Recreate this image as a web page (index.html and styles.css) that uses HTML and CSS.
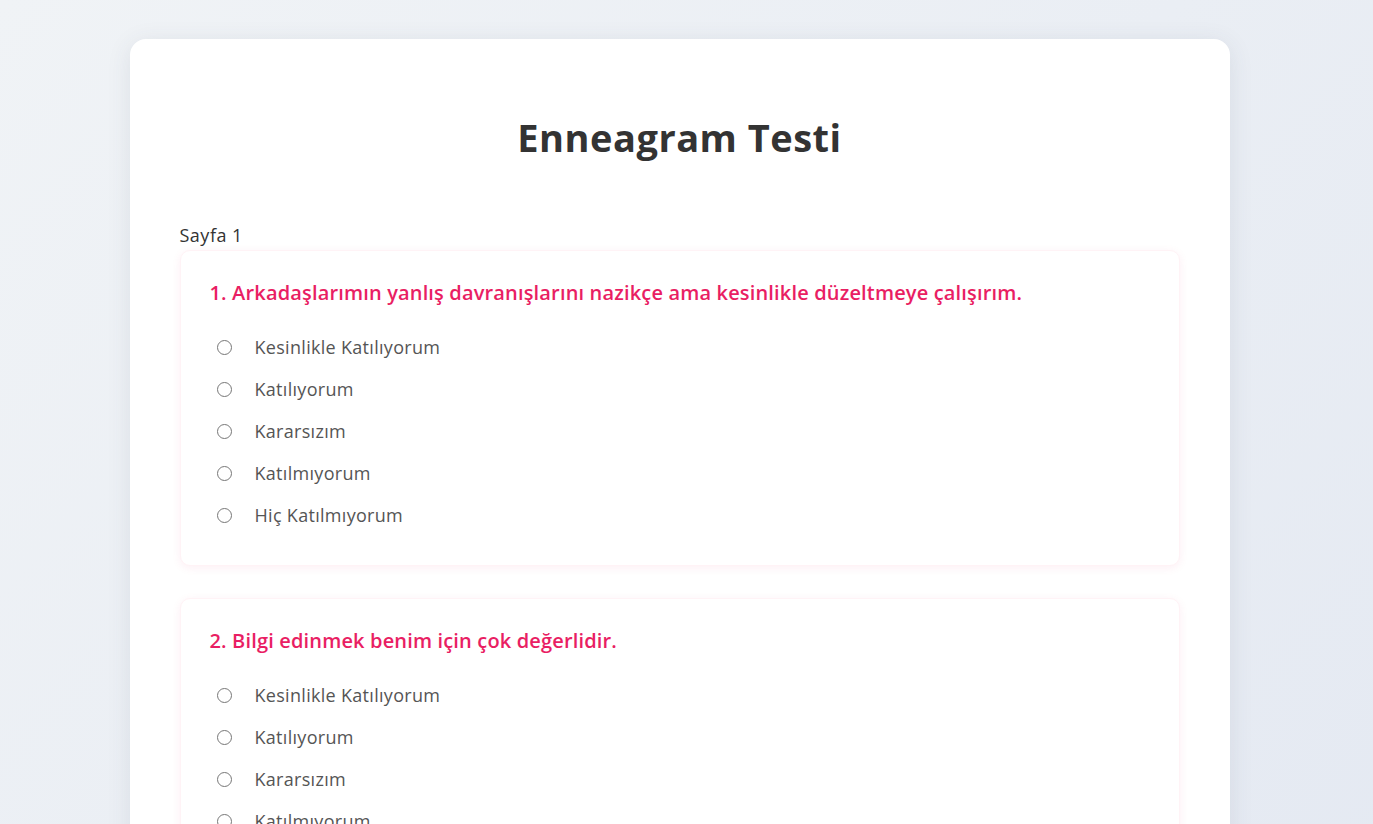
FILE: index.html
```html
<!DOCTYPE html>
<html lang="tr">
<head>
<meta charset="utf-8">
<title>Enneagram Testi</title>
<link rel="stylesheet" href="styles.css">
</head>
<body>
<div class="container">
  <h1 class="title">Enneagram Testi</h1>
  <div class="page-label">Sayfa 1</div>
  <div class="question">
    <h3 class="q-text">1. Arkadaşlarımın yanlış davranışlarını nazikçe ama kesinlikle düzeltmeye çalışırım.</h3>
    <label class="option"><input type="radio" name="q1"><span>Kesinlikle Katılıyorum</span></label>
    <label class="option"><input type="radio" name="q1"><span>Katılıyorum</span></label>
    <label class="option"><input type="radio" name="q1"><span>Kararsızım</span></label>
    <label class="option"><input type="radio" name="q1"><span>Katılmıyorum</span></label>
    <label class="option"><input type="radio" name="q1"><span>Hiç Katılmıyorum</span></label>
  </div>
  <div class="question">
    <h3 class="q-text">2. Bilgi edinmek benim için çok değerlidir.</h3>
    <label class="option"><input type="radio" name="q2"><span>Kesinlikle Katılıyorum</span></label>
    <label class="option"><input type="radio" name="q2"><span>Katılıyorum</span></label>
    <label class="option"><input type="radio" name="q2"><span>Kararsızım</span></label>
    <label class="option"><input type="radio" name="q2"><span>Katılmıyorum</span></label>
    <label class="option"><input type="radio" name="q2"><span>Hiç Katılmıyorum</span></label>
  </div>
</div>
</body>
</html>
```
FILE: styles.css
```css
html, body {
  margin: 0;
  padding: 0;
}
body {
  font-family: "Open Sans", "Noto Sans", sans-serif;
  background: linear-gradient(135deg, #f0f3f6 0%, #e4e9f2 100%);
  min-height: 100vh;
  padding: 39px 14px 0 0;
  color: #333;
}
.container {
  width: 1100px;
  box-sizing: border-box;
  margin: 0 auto;
  background: #fff;
  border-radius: 16px;
  box-shadow: 0 4px 24px rgba(60, 70, 90, 0.10);
  padding: 50px 50px 40px;
}
.title {
  margin: 24px 0 0;
  font-size: 38px;
  line-height: 48px;
  font-weight: 700;
  text-align: center;
  color: #333;
  letter-spacing: 0.5px;
}
.page-label {
  margin-top: 61px;
  font-size: 18px;
  line-height: 26px;
  color: #333;
  letter-spacing: 0.5px;
}
.question {
  margin-top: 2px;
  margin-bottom: 32px;
  background: #fff;
  border-radius: 10px;
  border: 1px solid #fff3f6;
  box-shadow: 0 2px 10px rgba(233, 30, 99, 0.07);
  padding: 29px;
  display: flex;
  flex-direction: column;
}
.question + .question {
  margin-top: 0;
}
.q-text {
  margin: 0 0 20px;
  font-size: 20px;
  line-height: 26px;
  font-weight: 600;
  color: #e91e63;
  letter-spacing: 0.16px;
}
.option {
  display: flex;
  align-items: center;
  height: 42px;
  font-size: 18px;
  color: #555;
  letter-spacing: 0.3px;
  cursor: pointer;
}
.option input {
  margin: 0 23px 0 7px;
  width: 15px;
  height: 15px;
  flex: none;
}
```
